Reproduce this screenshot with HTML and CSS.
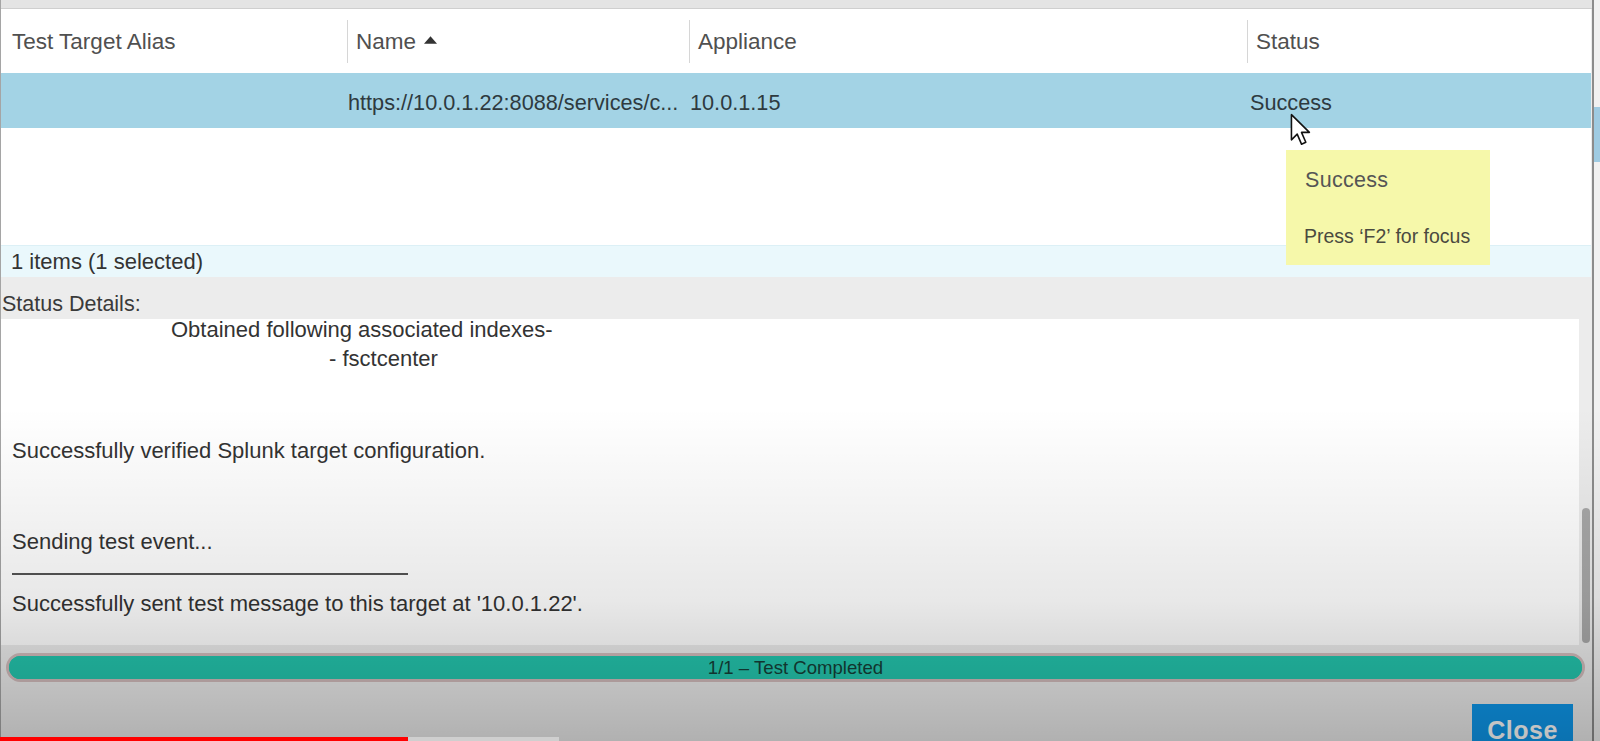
FILE: index.html
```html
<!DOCTYPE html>
<html lang="en">
<head>
    <meta charset="UTF-8">
    <meta name="viewport" content="width=device-width, initial-scale=1.0">
    <title>Test Target Results</title>
    <link rel="stylesheet" href="styles.css">
</head>
<body>
    <div class="screen">
        <div class="dialog">
            <div class="topbar"></div>
            <div class="grid">
                <div class="grid-head">
                    <div class="th">Test Target Alias</div>
                    <div class="th sep">Name
                        <svg class="sort" viewBox="0 0 12 7" width="13" height="8"><path d="M0 7 L6 0 L12 7 Z" fill="#333"/></svg>
                    </div>
                    <div class="th sep">Appliance</div>
                    <div class="th sep">Status</div>
                </div>
                <div class="grid-row selected">
                    <div class="td"></div>
                    <div class="td">https://10.0.1.22:8088/services/c...</div>
                    <div class="td">10.0.1.15</div>
                    <div class="td status">Success</div>
                </div>
                <div class="grid-empty"></div>
                <div class="grid-foot">1 items (1 selected)</div>
            </div>
            <div class="details">
                <div class="details-label">Status Details:</div>
                <div class="details-box">
                    <div class="details-text">
                        <div class="line first indent-1">Obtained following associated indexes-</div>
                        <div class="line indent-2">- fsctcenter</div>
                        <div class="line"></div>
                        <div class="line"></div>
                        <div class="line">Successfully verified Splunk target configuration.</div>
                        <div class="line"></div>
                        <div class="line"></div>
                        <div class="line">Sending test event...</div>
                        <div class="rule"></div>
                        <div class="line">Successfully sent test message to this target at '10.0.1.22'.</div>
                    </div>
                    <div class="scrollbar"><div class="thumb"></div></div>
                </div>
                <div class="progress">
                    <div class="progress-fill">1/1 – Test Completed</div>
                </div>
                <div class="actions">
                    <button class="btn-close">Close</button>
                </div>
            </div>
        </div>
        <div class="edge"><div class="edge-mark"></div></div>

        <div class="shade"></div>

        <div class="tooltip">
            <div class="tip-title">Success</div>
            <div class="tip-hint">Press ‘F2’ for focus</div>
        </div>

        <svg class="cursor" viewBox="0 0 16 24" width="23" height="35">
            <path d="M1 1 L1 18.5 L5 14.5 L8 21.5 L11 20.2 L8 13.3 L13.5 13.3 Z" fill="#fff" stroke="#111" stroke-width="1.1" stroke-linejoin="round"/>
        </svg>

        <div class="yt-bar">
            <div class="yt-played"></div>
            <div class="yt-buffer"></div>
        </div>
    </div>
</body>
</html>
```

FILE: styles.css
```css
body {
    margin: 0;
    font-family: "Liberation Sans", Arial, sans-serif;
    background-color: #ececec;
    overflow: hidden;
}

.screen {
    position: relative;
    display: flex;
    width: 1600px;
    height: 741px;
    overflow: hidden;
}

.dialog {
    width: 1591px;
    border-left: 1px solid #a5a5a5;
    border-right: 2px solid #8c8c8c;
    background-color: #ececec;
    display: flex;
    flex-direction: column;
}

.dialog > * {
    flex-shrink: 0;
}

.topbar {
    height: 8px;
    background-color: #e4e4e4;
    border-bottom: 1px solid #cfcfcf;
}

/* grid */

.grid {
    background-color: #fff;
    margin-right: 1px;
}

.grid-head,
.grid-row {
    display: grid;
    grid-template-columns: 346px 342px 558px 1fr;
}

.grid-head {
    padding: 11px 0 9px;
}

.th {
    height: 43px;
    display: flex;
    align-items: center;
    padding-left: 11px;
    font-size: 22.5px;
    color: #505050;
}

.th.sep {
    border-left: 1px solid #d6d6d6;
    padding-left: 8px;
}

.sort {
    margin-left: 8px;
    margin-top: -3px;
}

.grid-row {
    height: 55px;
    margin-top: 1px;
}

.grid-row.selected {
    background-color: #a3d3e5;
}

.td {
    display: flex;
    align-items: center;
    padding-top: 4px;
    padding-left: 1px;
    font-size: 21.7px;
    color: #2e3a3f;
}

.td.status {
    padding-left: 3px;
}

.grid-empty {
    height: 117px;
}

.grid-foot {
    height: 31px;
    border-top: 1px solid #dcf0f6;
    background-color: #eaf8fc;
    display: flex;
    align-items: center;
    padding-left: 10px;
    font-size: 22px;
    color: #333;
}

/* details */

.details {
    flex: 1;
    flex-shrink: 1;
    min-height: 0;
    display: flex;
    flex-direction: column;
}

.details > * {
    flex-shrink: 0;
}

.details-label {
    padding-top: 13px;
    height: 28px;
    line-height: 28px;
    padding-left: 1px;
    font-size: 21.5px;
    color: #3a3a3a;
}

.details-box {
    margin-top: 1px;
    height: 326px;
    display: flex;
}

.details-text {
    flex: 1;
    background-color: #fff;
    padding-left: 11px;
    font-size: 22px;
    color: #333;
}

.line {
    height: 30.5px;
    line-height: 30.5px;
    white-space: nowrap;
}

.line.first {
    height: 25px;
    line-height: 22px;
}

.indent-1 {
    padding-left: 159px;
}

.indent-2 {
    padding-left: 317px;
}

.rule {
    width: 396px;
    margin: 15px 0 14px;
    border-top: 2px solid #555;
}

.scrollbar {
    width: 13px;
    display: flex;
    flex-direction: column;
    justify-content: flex-end;
    align-items: center;
    padding-bottom: 2px;
    box-sizing: border-box;
}

.thumb {
    width: 8px;
    height: 135px;
    border-radius: 4px;
    background-color: #a8a8a8;
}

.progress {
    margin: 8px 7px 0 5px;
    height: 23px;
    border: 3px solid #d2bcbc;
    border-radius: 16px;
    background-color: #24c6ae;
}

.progress-fill {
    height: 100%;
    border-radius: 12px;
    background-color: #24c6ae;
    display: flex;
    align-items: center;
    justify-content: center;
    font-size: 18.6px;
    color: #143f38;
}

.actions {
    display: flex;
    justify-content: flex-end;
    margin-top: 22px;
    padding-right: 19px;
}

.btn-close {
    width: 101px;
    height: 48px;
    border: none;
    padding: 4px 0 0;
    background-color: #0e98ec;
    color: #fff;
    font-family: "Liberation Sans", Arial, sans-serif;
    font-size: 25px;
    font-weight: bold;
    letter-spacing: 0.5px;
}

/* right edge of the window */

.edge {
    width: 6px;
    background-color: #f1f1f1;
}

.edge-mark {
    margin-top: 107px;
    height: 55px;
    background-color: #9fcbe2;
}

/* overlays */

.shade {
    position: absolute;
    inset: 0;
    pointer-events: none;
    background: linear-gradient(to bottom,
        rgba(0, 0, 0, 0) 0%,
        rgba(0, 0, 0, 0) 55%,
        rgba(0, 0, 0, 0.09) 81%,
        rgba(0, 0, 0, 0.2) 94%,
        rgba(0, 0, 0, 0.25) 100%);
}

.tooltip {
    position: absolute;
    left: 1286px;
    top: 150px;
    width: 204px;
    height: 115px;
    box-sizing: border-box;
    padding: 16px 0 0 19px;
    background-color: #f6f8aa;
    color: #555;
}

.tip-title {
    font-size: 21.5px;
    line-height: 28px;
    letter-spacing: 0.3px;
}

.tip-hint {
    margin-top: 30px;
    margin-left: -1px;
    font-size: 19.5px;
    line-height: 24px;
    color: #4a4a40;
}

.cursor {
    position: absolute;
    left: 1290px;
    top: 113px;
}

.yt-bar {
    position: absolute;
    left: 0;
    bottom: 0;
    height: 4px;
    display: flex;
}

.yt-played {
    width: 408px;
    background-color: #f00;
}

.yt-buffer {
    width: 151px;
    background-color: #cfcfcf;
}
```
